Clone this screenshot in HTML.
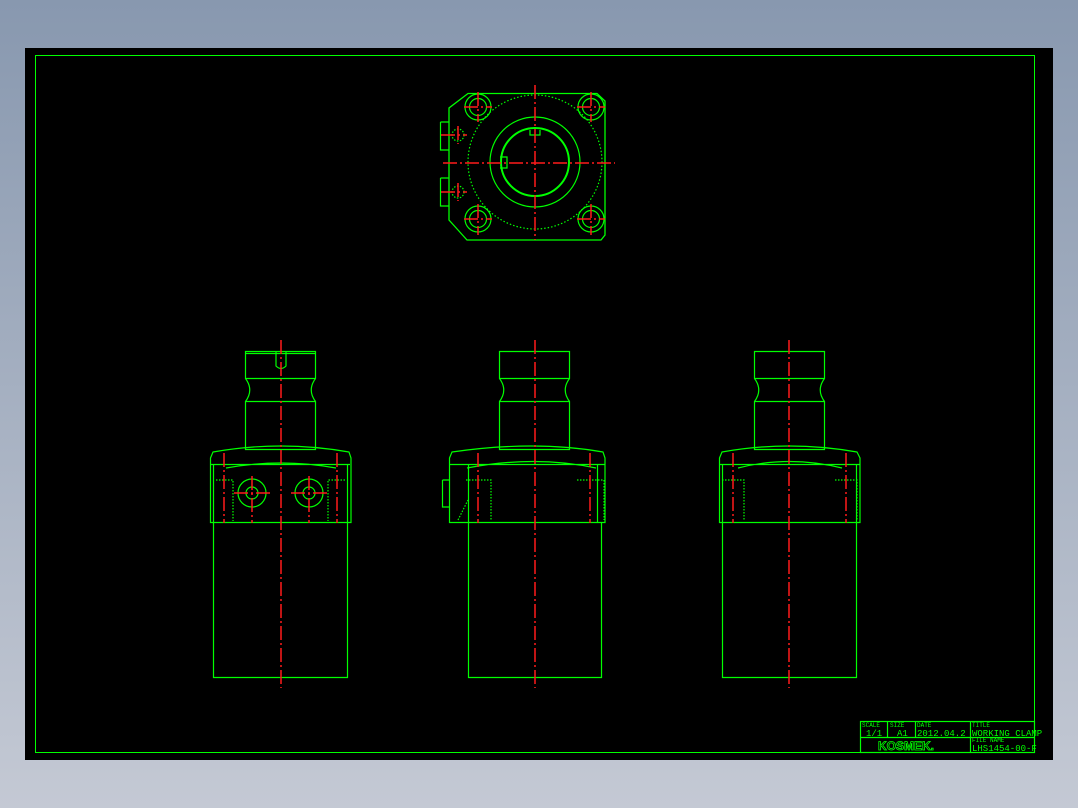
<!DOCTYPE html>
<html><head><meta charset="utf-8"><style>
html,body{margin:0;padding:0;width:1078px;height:808px;overflow:hidden;background:linear-gradient(#8a99b0,#c3c8d3);}
svg{display:block}
text{font-family:"Liberation Mono",monospace;fill:#00ff00}
</style></head><body>
<svg width="1078" height="808" viewBox="0 0 1078 808">
<defs>
<linearGradient id="bg" x1="0" y1="0" x2="0" y2="1"><stop offset="0" stop-color="#8898af"/><stop offset="1" stop-color="#c4c9d4"/></linearGradient>
</defs>
<rect width="1078" height="808" fill="url(#bg)"/>
<rect x="25" y="48" width="1028" height="712" fill="#000"/>
<g fill="none" stroke="#00ff00" stroke-width="1.2">
<rect x="35.5" y="55.5" width="999" height="697" stroke-width="1"/>
<!-- title block -->
<rect x="860.5" y="721.5" width="174" height="31"/>
<line x1="860" y1="737.5" x2="970" y2="737.5"/>
<line x1="887.5" y1="721" x2="887.5" y2="737"/>
<line x1="915.5" y1="721" x2="915.5" y2="737"/>
<line x1="970.5" y1="721" x2="970.5" y2="752"/>
<line x1="970" y1="737.5" x2="1034" y2="737.5"/>
<!-- top view -->
<path d="M468 93.5 H597 L605 101 V235 L601 240 H467 L458 230 L449 220 V108 Z" stroke-width="1.3"/>
<path d="M440.5 122 H449 M440.5 122 V150 H449 M440.5 178 H449 M440.5 178 V206 H449"/>
<circle cx="535" cy="162" r="67" stroke-dasharray="1.5 2"/>
<circle cx="535" cy="162" r="45"/>
<circle cx="535" cy="162" r="34" stroke-width="2"/>
<path d="M530 130 V135 H540 V130 M500 157 H507 V168 H500"/>
<g>
<circle cx="478" cy="107" r="13"/><circle cx="478" cy="107" r="8.5"/>
<circle cx="591" cy="107" r="13"/><circle cx="591" cy="107" r="8.5"/>
<circle cx="478" cy="219" r="13"/><circle cx="478" cy="219" r="8.5"/>
<circle cx="591" cy="219" r="13"/><circle cx="591" cy="219" r="8.5"/>
</g>
<circle cx="458" cy="135" r="6" stroke-dasharray="1.5 1.5"/>
<circle cx="458" cy="192" r="6" stroke-dasharray="1.5 1.5"/>

<!-- side view 1 -->
<path d="M245.5 351.5 H315.5 V378.5 Q307 390 315.5 401.5 V449.5 H245.5 V401.5 Q254 390 245.5 378.5 Z"/>
<line x1="245" y1="353.5" x2="316" y2="353.5"/>
<line x1="245" y1="378.5" x2="316" y2="378.5"/>
<line x1="245" y1="401.5" x2="316" y2="401.5"/>
<path d="M276 351 V366 Q281 371 286 366 V351"/>
<path d="M210.5 458 L213 452 Q281 440 349 452 L351 458 V522.5 H210.5 Z"/>
<path d="M211 464.5 H350 M226 468 Q281 458 336 468"/>
<path d="M213.5 464 V522 M347.5 464 V522"/>
<path d="M213.5 522 V677.5 H347.5 V522"/>
<circle cx="252" cy="493" r="14"/><circle cx="252" cy="493" r="6"/>
<circle cx="309" cy="493" r="14"/><circle cx="309" cy="493" r="6"/>
<path d="M216 480 H233 V521 M345 480 H328 V521" stroke-dasharray="1.5 1.5"/>
<!-- side view 2 -->
<path d="M499.5 351.5 H569.5 V378.5 Q561 390 569.5 401.5 V449.5 H499.5 V401.5 Q508 390 499.5 378.5 Z"/>
<line x1="499" y1="378.5" x2="570" y2="378.5"/>
<line x1="499" y1="401.5" x2="570" y2="401.5"/>
<path d="M449.5 458 L452 452 Q535 440 603 452 L605 458 V522.5 H449.5 Z"/>
<path d="M450 464.5 H605 M467 468 Q535 455 596 468"/>
<path d="M468.5 464 V522 M597.5 464 V522"/>
<path d="M468.5 522 V677.5 H601.5 V522"/>
<path d="M442.5 480 H449 M442.5 480 V507 H449"/>
<path d="M466 480 H491 V520 M577 480 H604 V520 M458 520 L468 500" stroke-dasharray="1.5 1.5"/>
<!-- side view 3 -->
<path d="M754.5 351.5 H824.5 V378.5 Q816 390 824.5 401.5 V449.5 H754.5 V401.5 Q763 390 754.5 378.5 Z"/>
<line x1="754" y1="378.5" x2="825" y2="378.5"/>
<line x1="754" y1="401.5" x2="825" y2="401.5"/>
<path d="M719.5 458 L722 452 Q789 440 857 452 L860 458 V522.5 H719.5 Z"/>
<path d="M720 464.5 H860 M738 468 Q789 455 842 468"/>
<path d="M722.5 464 V522 M856.5 464 V522"/>
<path d="M722.5 522 V677.5 H856.5 V522"/>
<path d="M722 480 H744 V520 M835 480 H857 V520" stroke-dasharray="1.5 1.5"/>
</g>
<!-- centerlines -->
<g stroke="#ff1a1a" stroke-width="1.5" stroke-dasharray="14 3 2 3" fill="none">
<line x1="535" y1="85" x2="535" y2="240"/>
<line x1="443" y1="163" x2="615" y2="163"/>
<line x1="478" y1="92" x2="478" y2="122"/><line x1="464" y1="107" x2="492" y2="107"/>
<line x1="591" y1="92" x2="591" y2="122"/><line x1="577" y1="107" x2="605" y2="107"/>
<line x1="478" y1="204" x2="478" y2="235"/><line x1="464" y1="219" x2="492" y2="219"/>
<line x1="591" y1="204" x2="591" y2="235"/><line x1="577" y1="219" x2="605" y2="219"/>
<line x1="441" y1="135" x2="467" y2="135"/><line x1="458" y1="126" x2="458" y2="144"/>
<line x1="441" y1="192" x2="467" y2="192"/><line x1="458" y1="183" x2="458" y2="201"/>
<line x1="281" y1="340" x2="281" y2="688"/>
<line x1="535" y1="340" x2="535" y2="688"/>
<line x1="789" y1="340" x2="789" y2="688"/>
<line x1="224" y1="453" x2="224" y2="523"/><line x1="337" y1="453" x2="337" y2="523"/>
<line x1="252" y1="476" x2="252" y2="523"/><line x1="309" y1="476" x2="309" y2="523"/>
<line x1="234" y1="493" x2="270" y2="493"/><line x1="291" y1="493" x2="327" y2="493"/>
<line x1="478" y1="453" x2="478" y2="523"/><line x1="590" y1="453" x2="590" y2="523"/>
<line x1="733" y1="453" x2="733" y2="523"/><line x1="846" y1="453" x2="846" y2="523"/>
</g>
<g font-size="6">
<text x="862" y="727">SCALE</text><text x="890" y="727">SIZE</text><text x="917" y="727">DATE</text><text x="972" y="727">TITLE</text>
<text x="972" y="742">FILE NAME</text>
</g>
<g font-size="9">
<text x="866" y="736">1/1</text><text x="897" y="736">A1</text><text x="917" y="736">2012.04.2</text>
<text x="972" y="736">WORKING CLAMP</text>
<text x="972" y="751">LHS1454-00-F</text>
</g>
<text x="878" y="750" font-size="12" font-weight="bold" style="fill:none;stroke:#00ff00;stroke-width:0.8;font-family:'Liberation Sans',sans-serif">KOSMEK.</text>
</svg>
</body></html>
